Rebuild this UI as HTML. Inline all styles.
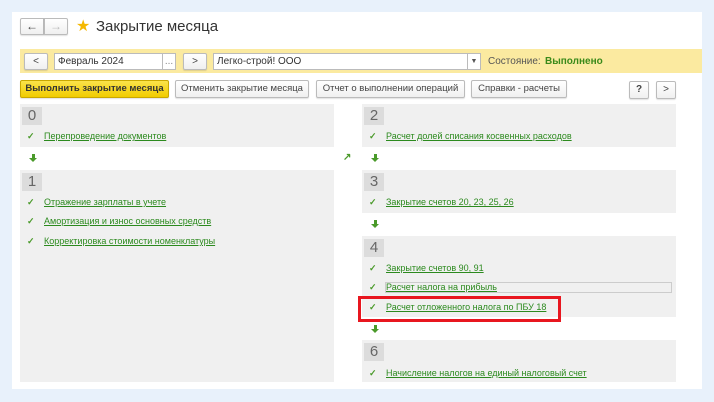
<!DOCTYPE html><html><head><meta charset="utf-8"><style>
*{margin:0;padding:0;box-sizing:border-box}
body{width:714px;height:402px;background:#e8f1fb;font-family:"Liberation Sans",sans-serif;position:relative;overflow:hidden;font-size:10px;color:#333}
.a{position:absolute}
.panel{left:12px;top:12px;width:690px;height:377px;background:#fff}
.btn{position:absolute;height:18px;border:1px solid #bbb;border-radius:2px;background:linear-gradient(#fff,#f0f0f0);font-size:10px;color:#444;text-align:center;line-height:16px;box-shadow:0 1px 1px rgba(0,0,0,.12);white-space:nowrap}
.blk{position:absolute;background:#f0f0f0}
.num{position:absolute;left:2px;top:3px;width:20px;height:18px;background:#dcdcdc;font-size:15px;color:#666;text-align:center;line-height:18px}
.it{position:absolute;left:0;height:14px;font-size:9px}
.it .c{position:absolute;left:7px;top:0;color:#4a9a2a;font-size:9px;font-weight:bold}
.it a{position:absolute;left:24px;top:0;color:#2c8a1e;text-decoration:underline;white-space:nowrap}
.dn{position:absolute;width:6px;height:8px}
.dn:before{content:"";position:absolute;left:1.5px;top:0;width:3px;height:4px;background:#4a9a2a}
.dn:after{content:"";position:absolute;left:-1px;top:4px;border-left:4px solid transparent;border-right:4px solid transparent;border-top:4px solid #4a9a2a}
.inp{position:absolute;height:17px;background:#fff;border:1px solid #bbb;font-size:10px;line-height:15px;padding-left:3px;color:#333}
</style></head><body>
<div class="a panel"></div>
<div class="btn" style="left:20px;top:18px;width:24px;height:17px;font-size:12px;line-height:14px;border-radius:2px 0 0 2px">&#8592;</div>
<div class="btn" style="left:44px;top:18px;width:24px;height:17px;font-size:12px;line-height:14px;color:#bbb;border-radius:0 2px 2px 0">&#8594;</div>
<div class="a" style="left:76px;top:16px;color:#f5b800;font-size:16px">&#9733;</div>
<div class="a" style="left:96px;top:18px;font-size:15px;color:#333">Закрытие месяца</div>
<div class="a" style="left:20px;top:49px;width:682px;height:24px;background:#fbeaa0"></div>
<div class="btn" style="left:24px;top:53px;width:24px;height:17px">&lt;</div>
<div class="inp" style="left:54px;top:53px;width:109px">Февраль 2024</div>
<div class="inp" style="left:162px;top:53px;width:14px;padding:0;text-align:center;color:#888">...</div>
<div class="btn" style="left:183px;top:53px;width:24px;height:17px">&gt;</div>
<div class="inp" style="left:213px;top:53px;width:255px">Легко-строй! ООО</div>
<div class="inp" style="left:467px;top:53px;width:14px;padding:0;text-align:center;font-size:7px;color:#555">&#9660;</div>
<div class="a" style="left:488px;top:56px;color:#555">Состояние:</div>
<div class="a" style="left:545px;top:56px;color:#3a8a1a;font-weight:bold">Выполнено</div>
<div class="btn" style="left:20px;top:80px;width:149px;background:linear-gradient(#fbe34a,#f1cc00);border-color:#c9a800;color:#333;font-weight:bold;font-size:9.5px">Выполнить закрытие месяца</div>
<div class="btn" style="left:175px;top:80px;width:134px;font-size:9.5px">Отменить закрытие месяца</div>
<div class="btn" style="left:316px;top:80px;width:149px;font-size:9.5px">Отчет о выполнении операций</div>
<div class="btn" style="left:471px;top:80px;width:96px;font-size:9.5px">Справки - расчеты</div>
<div class="btn" style="left:629px;top:81px;width:20px;font-weight:bold">?</div>
<div class="btn" style="left:656px;top:81px;width:20px">&gt;</div>

<div class="blk" style="left:20px;top:104px;width:314px;height:43px"><div class="num">0</div>
<div class="it" style="top:27px"><span class="c">&#10003;</span><a>Перепроведение документов</a></div></div>
<div class="dn" style="left:30px;top:154px"></div>
<div class="blk" style="left:20px;top:170px;width:314px;height:212px"><div class="num">1</div>
<div class="it" style="top:27px"><span class="c">&#10003;</span><a>Отражение зарплаты в учете</a></div>
<div class="it" style="top:46px"><span class="c">&#10003;</span><a>Амортизация и износ основных средств</a></div>
<div class="it" style="top:66px"><span class="c">&#10003;</span><a>Корректировка стоимости номенклатуры</a></div></div>
<div class="a" style="left:343px;top:152px;color:#4a9a2a;font-size:10px;font-weight:bold">&#8599;</div>

<div class="blk" style="left:362px;top:104px;width:314px;height:43px"><div class="num">2</div>
<div class="it" style="top:27px"><span class="c">&#10003;</span><a>Расчет долей списания косвенных расходов</a></div></div>
<div class="dn" style="left:372px;top:154px"></div>
<div class="blk" style="left:362px;top:170px;width:314px;height:43px"><div class="num">3</div>
<div class="it" style="top:27px"><span class="c">&#10003;</span><a>Закрытие счетов 20, 23, 25, 26</a></div></div>
<div class="dn" style="left:372px;top:220px"></div>
<div class="blk" style="left:362px;top:236px;width:314px;height:81px"><div class="num">4</div>
<div class="it" style="top:27px"><span class="c">&#10003;</span><a>Закрытие счетов 90, 91</a></div>
<div class="a" style="left:23px;top:46px;width:287px;height:11px;border:1px solid #ccc"></div>
<div class="it" style="top:46px"><span class="c">&#10003;</span><a>Расчет налога на прибыль</a></div>
<div class="it" style="top:66px"><span class="c">&#10003;</span><a>Расчет отложенного налога по ПБУ 18</a></div></div>
<div class="a" style="left:358px;top:296px;width:203px;height:26px;border:3px solid #e8161f"></div>
<div class="dn" style="left:372px;top:325px"></div>
<div class="blk" style="left:362px;top:340px;width:314px;height:42px"><div class="num">6</div>
<div class="it" style="top:28px"><span class="c">&#10003;</span><a>Начисление налогов на единый налоговый счет</a></div></div>
</body></html>
